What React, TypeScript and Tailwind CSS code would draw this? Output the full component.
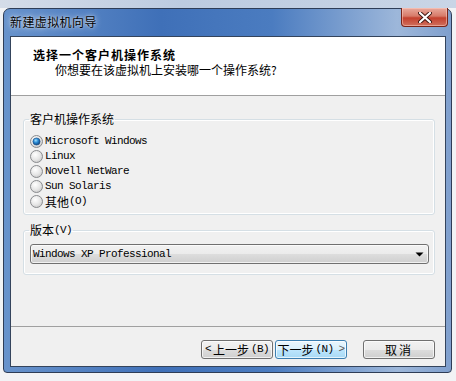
import React from "react";

const cjk = "font-['Noto_Sans_CJK_SC',sans-serif]";
const mono = "font-['Liberation_Mono','Noto_Sans_CJK_SC',monospace] text-[11px] tracking-[-0.6px]";

function Radio({ checked }: { checked?: boolean }) {
  return (
    <svg width="13" height="13" viewBox="0 0 13 13" className="shrink-0">
      <defs>
        <radialGradient id="rOff" cx="0.4" cy="0.35" r="0.7">
          <stop offset="0" stopColor="#ffffff" />
          <stop offset="0.6" stopColor="#e6e6e6" />
          <stop offset="1" stopColor="#c9c9c9" />
        </radialGradient>
        <radialGradient id="rDot" cx="0.4" cy="0.35" r="0.7">
          <stop offset="0" stopColor="#9fe0ff" />
          <stop offset="0.45" stopColor="#2a8ad4" />
          <stop offset="1" stopColor="#0d3f78" />
        </radialGradient>
      </defs>
      <circle cx="6.5" cy="6.5" r="6" fill="url(#rOff)" stroke="#8a8c8f" />
      {checked && <circle cx="6.5" cy="6.5" r="3.6" fill="url(#rDot)" stroke="#1a4a80" strokeWidth="0.6" />}
    </svg>
  );
}

function Option({ checked, children }: { checked?: boolean; children: React.ReactNode }) {
  return (
    <div className="flex h-[15px] items-center gap-[2px] text-black">
      <Radio checked={checked} />
      <span className="flex items-center leading-[15px]">{children}</span>
    </div>
  );
}

function Button({ active, children }: { active?: boolean; children: React.ReactNode }) {
  return (
    <div
      className={
        active
          ? "flex h-[19px] w-[72px] items-center justify-center rounded-[3px] border border-[#3c7fb1] bg-[linear-gradient(to_bottom,#eaf6fd_0%,#d9f0fc_50%,#bee6fd_50%,#a7d9f5_100%)] shadow-[inset_0_0_0_1px_rgba(255,255,255,0.7)]"
          : "flex h-[19px] w-[72px] items-center justify-center rounded-[3px] border border-[#707070] bg-[linear-gradient(to_bottom,#f2f2f2_0%,#ebebeb_50%,#dddddd_50%,#cfcfcf_100%)] shadow-[inset_0_0_0_1px_rgba(255,255,255,0.7)]"
      }
    >
      {children}
    </div>
  );
}

export default function App() {
  return (
    <div className="flex h-[381px] w-[456px] flex-col overflow-hidden bg-[#f2f3f5]">
      <div className="h-[8px] shrink-0 bg-[linear-gradient(to_right,#d4dce8,#bccbe0_40%,#c9d5e6)]" />
      <div className="flex">
        <div className="w-[3px] shrink-0" />
        <div className="flex h-[365px] w-[449px] flex-col rounded-t-[7px] rounded-b-[4px] border border-[#2e3d57] bg-[linear-gradient(to_right,#6893cc_0%,#3f70b8_35%,#4b7cc0_60%,#9db7da_88%,#7f9fcd_100%)]">
          <div className="flex h-[27px] shrink-0 items-start justify-between pl-[6px] pr-[3px]">
            <span
              className={`${cjk} pt-[6px] text-[12px] leading-[14px] tracking-[0.4px] text-black [text-shadow:0_0_6px_rgba(255,255,255,0.9),0_0_2px_rgba(255,255,255,0.6)]`}
            >
              新建虚拟机向导
            </span>
            <div className="-mt-[1px] flex h-[19px] w-[47px] items-center justify-center rounded-b-[4px] border border-t-0 border-[#7a2418] bg-[linear-gradient(to_bottom,#e9a99c_0%,#d77a69_45%,#c4402e_55%,#d0705e_100%)] shadow-[inset_0_0_0_1px_rgba(255,210,200,0.5)]">
              <svg width="14" height="11" viewBox="0 0 14 11">
                <path d="M2 1 L12 10 M12 1 L2 10" stroke="#3b1410" strokeWidth="4" strokeLinecap="round" />
                <path d="M2 1 L12 10 M12 1 L2 10" stroke="#ffffff" strokeWidth="2.2" strokeLinecap="round" />
              </svg>
            </div>
          </div>

          <div className="ml-[6px] mr-[5px] flex h-[331px] flex-col border border-[#34445c] bg-[#f0f0f0]">
            <div className={`${cjk} h-[59px] shrink-0 border-b border-[#a0a0a0] bg-white pt-[10px] text-[12px] leading-[15px] text-black`}>
              <div className="pl-[22px] font-bold tracking-[1px]">选择一个客户机操作系统</div>
              <div className="pl-[44px]">你想要在该虚拟机上安装哪一个操作系统?</div>
            </div>

            <div className="flex flex-1 flex-col pl-[12px] pr-[10px] pt-[16px]">
              <fieldset className="h-[103px] w-[412px] rounded-[3px] border border-[#d5dfe5] pl-[5px] pb-[5px] shadow-[inset_0_0_0_1px_#ffffff]">
                <legend className={`${cjk} px-[1px] text-[12px] leading-[14px] text-black`}>客户机操作系统</legend>
                <div className="ml-[1px] flex flex-col pt-[8px]">
                  <Option checked>
                    <span className={mono}>Microsoft Windows</span>
                  </Option>
                  <Option>
                    <span className={mono}>Linux</span>
                  </Option>
                  <Option>
                    <span className={mono}>Novell NetWare</span>
                  </Option>
                  <Option>
                    <span className={mono}>Sun Solaris</span>
                  </Option>
                  <Option>
                    <span className={`${cjk} text-[12px]`}>其他</span>
                    <span className={mono}>(O)</span>
                  </Option>
                </div>
              </fieldset>

              <fieldset className="mt-[8px] h-[52px] w-[412px] rounded-[3px] border border-[#d5dfe5] pl-[5px] pr-[5px] shadow-[inset_0_0_0_1px_#ffffff]">
                <legend className="flex items-center px-[1px] leading-[14px] text-black">
                  <span className={`${cjk} text-[12px]`}>版本</span>
                  <span className={mono}>(V)</span>
                </legend>
                <div className="ml-[1px] pt-[7px]">
                  <div className="flex h-[20px] items-center justify-between rounded-[3px] border border-[#707070] bg-[linear-gradient(to_bottom,#f2f2f2_0%,#ebebeb_50%,#dddddd_50%,#cfcfcf_100%)] pl-[2px] pr-[4px] shadow-[inset_0_0_0_1px_rgba(255,255,255,0.7)]">
                    <span className={`${mono} text-black`}>Windows XP Professional</span>
                    <svg width="9" height="5" viewBox="0 0 9 5">
                      <path d="M0.5 0.5 H8.5 L4.5 4.5 Z" fill="#000" />
                    </svg>
                  </div>
                </div>
              </fieldset>
            </div>

            <div className="flex h-[40px] shrink-0 justify-end gap-[2px] border-t border-[#a0a0a0] pr-[10px] pt-[13px]">
              <Button>
                <span className="flex items-center gap-[2px] text-black">
                  <span className={mono}>&lt;</span>
                  <span className={`${cjk} text-[12px]`}>上一步</span>
                  <span className={mono}>(B)</span>
                </span>
              </Button>
              <Button active>
                <span className="flex items-center gap-[2px] text-black">
                  <span className={`${cjk} text-[12px]`}>下一步</span>
                  <span className={mono}>(N)</span>
                  <span className={`${mono} pl-[3px] text-[#555]`}>&gt;</span>
                </span>
              </Button>
              <div className="w-[12px]" />
              <Button>
                <span className={`${cjk} text-[12px] tracking-[2px] text-black`}>取消</span>
              </Button>
            </div>
          </div>
        </div>
      </div>
    </div>
  );
}
